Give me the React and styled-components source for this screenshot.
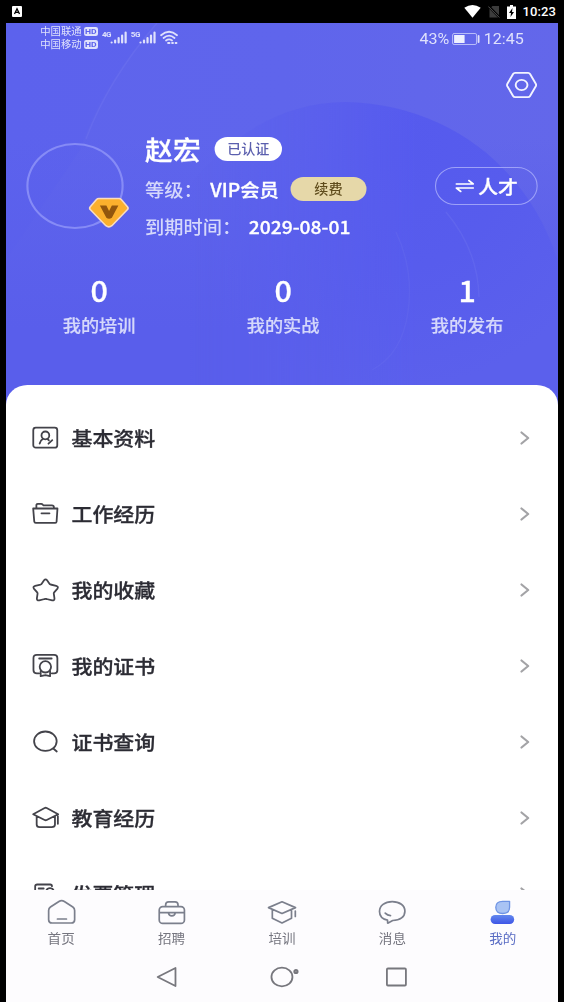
import styled, { createGlobalStyle } from "styled-components";

// the screen is laid out 516px wide and stretched to the 552px of the frame
const STRETCH = 552 / 516;

const COLORS = {
  white: "#ffffff",
  soft: "#d5d8fb",
  ink: "#2c2c34",
  grey: "#75757f",
  brand: "#5b60ec",
  tab: "#fdfcfe",
  active: "#5a6cc4",
};

const menus = [
  { label: "基本资料", icon: "profile" },
  { label: "工作经历", icon: "folder" },
  { label: "我的收藏", icon: "star" },
  { label: "我的证书", icon: "cert" },
  { label: "证书查询", icon: "search" },
  { label: "教育经历", icon: "cap" },
  { label: "发票管理", icon: "invoice" },
];

const stats = [
  { value: 0, label: "我的培训" },
  { value: 0, label: "我的实战" },
  { value: 1, label: "我的发布" },
];

const tabs = [
  { label: "首页", icon: "home" },
  { label: "招聘", icon: "bag" },
  { label: "培训", icon: "tabCap" },
  { label: "消息", icon: "chat" },
  { label: "我的", icon: "me", active: true },
];

const icons = {
  profile: (
    <>
      <rect x="1.600" y="3.700" width="24" height="20" rx="2.500" />
      <circle cx="13.700" cy="11.400" r="3.900" />
      <path d="M8 19.500c.5-2.400 1.600-3.800 3.400-4.800M15.800 14.800l1.400 1.600M16.800 19.700l3.800-3.500" />
    </>
  ),
  folder: (
    <>
      <path d="M1.500 8.500h24.300l-.9 13.200q-.1 1.200-1.300 1.200H4q-1.200 0-1.400-1.200zM4.700 8.500V5.300q0-1.500 1.500-1.500h3.300q.9 0 1.600.8l.7.700h8.400q2 0 2 1.800v1.400M9.800 13.300h8" />
    </>
  ),
  star: (
    <path d="M12.400 4.300q1.500-2 3 0l2.400 3.400q.4.600 1.100.8l5.600 1.300q2.600.8 1.300 2.800L22.500 16.400q-.5.600-.4 1.300l.7 4.700q0 2.400-2.300 2l-5.600-1.400q-.9-.2-1.800 0l-5.600 1.400q-2.300.4-2.300-2l.7-4.700q.1-.7-.4-1.300L2.200 12.600q-1.300-2 1.300-2.800L8.900 8.500q.7-.2 1.100-.8z" />
  ),
  cert: (
    <>
      <path d="M7.500 21.300H5.200q-3.400 0-3.400-3.100V6q0-3.200 3.400-3.200h17.200q3.300 0 3.300 3.200v12.200q0 3.100-3.300 3.100h-2.300M7.500 6.500h12.500" />
      <circle cx="13.700" cy="14.800" r="5.700" />
      <path d="M9 19v5.200l4.700-1 4.700 1V19" />
    </>
  ),
  search: (
    <>
      <ellipse cx="13.700" cy="13.200" rx="11.300" ry="9.700" />
      <path d="M21.600 20.500l3.500 3" />
    </>
  ),
  cap: (
    <>
      <path d="M1.500 10.200L13 4q1-.5 2 0l11.500 6.200L15 16q-1 .5-2 0zM5 12.500V20.500q0 2.700 3 2.700h12q3.300 0 3.300-2.700v-8M26.200 12.200v7.600" />
    </>
  ),
  invoice: (
    <>
      <path d="M3.500 22V6.200q0-1.700 2-1.700h13q1.800 0 1.800 1.700M7 8.500h5M14.500 11q.8-2.800 3.800-2.800t3.800 2.800" />
      <path d="M7 14h4M7 22h12" />
    </>
  ),
  home: (
    <path d="M2 14.500q0-2.300 1.800-3.500l8.500-5.500q2.700-1.700 5.400 0l8.500 5.500q1.800 1.200 1.800 3.500v9.200q0 3.300-3.300 3.300H5.300Q2 27 2 23.700zM10.800 23h9" />
  ),
  bag: (
    <>
      <rect x="2.400" y="10.600" width="25.200" height="16.800" rx="3.500" />
      <path d="M8.800 10.200V8.900q0-3 3-3h6.400q3 0 3 3v1.300M3 16.600h9M18 16.600h9M11.500 16.600q.6 3.200 3.500 3.200t3.500-3.200z" />
    </>
  ),
  tabCap: (
    <path d="M1.500 11.600L15 5.800l13.500 5.800L15 17.500zM5.300 13.800v8.400l9.700 4.700 9.500-4.700v-8M28.300 15v5.500" />
  ),
  chat: (
    <path d="M10.300 24.200C5.300 23 2.300 19.600 2.300 15.400 2.300 9.700 7.500 5.600 15 5.600s12.700 4 12.700 9.600c0 5.600-4.700 9.300-12.200 9.300l-5 2.700zM8 17.200q2.300 2.400 5.300 2.400" />
  ),
  me: (
    <>
      <defs>
        <linearGradient id="me" x1="0" y1="0" x2="0" y2="1">
          <stop offset="0" stopColor="#6388ee" />
          <stop offset="1" stopColor="#3e55e6" />
        </linearGradient>
      </defs>
      <path
        d="M22.200 5.300v6q0 6.200-6.900 6.200t-6.900-6.200q0-6 6.900-6z"
        fill="#a9c3f4"
        stroke="#6f94e4"
        strokeWidth="1.300"
      />
      <rect x="3.200" y="19" width="23.600" height="9" rx="4.500" fill="url(#me)" stroke="none" />
    </>
  ),
};

export default function App() {
  return (
    <>
      <GlobalStyle />
      <Frame>
        <SystemBar>
          <svg width="10" height="11" viewBox="0 0 10 11">
            <rect width="10" height="11" rx="1" fill="#fff" />
            <path d="M2.500 8L5 2.700 7.500 8M3.500 6.300h3" fill="none" stroke="#000" strokeWidth="1.300" />
          </svg>
          <SystemRight>
            <svg width="17" height="13" viewBox="0 0 17 13">
              <path d="M.3 2.800Q8.500-2.600 16.700 2.800L8.500 12.800z" fill="#fff" />
            </svg>
            <svg width="12" height="13" viewBox="0 0 12 13">
              <path d="M4.500 1H11v11.500H1.500V4z" fill="#3c3c3c" />
              <path d="M.5 1l11 11.500" stroke="#000" strokeWidth="2.500" />
              <path d="M.3 1.500l11 11" stroke="#555" strokeWidth="1" />
            </svg>
            <svg width="9" height="14" viewBox="0 0 9 14">
              <path d="M3 0h3v1.500h3V14H0V1.500h3z" fill="#fff" />
              <path d="M5.500 3L2 8h2l-.5 4L7 7H5z" fill="#000" />
            </svg>
            <Clock>10:23</Clock>
          </SystemRight>
        </SystemBar>
        <Screen>
          <Header>
            <Waves />
            <PhoneBar>
              <Carriers>
                {["中国联通", "中国移动"].map((name) => (
                  <Carrier key={name}>
                    {name}
                    <Hd>HD</Hd>
                  </Carrier>
                ))}
              </Carriers>
              <Signal label="4G" />
              <Signal label="5G" />
              <Glyph w={18} h={14} stroke="#dfe1fc" weight={1.8}>
                <path d="M1 4.200Q9-2.600 17 4.200M3.500 7Q9 2.200 14.500 7M6 9.500q3-2.300 6 0" />
                <path d="M8 12h1.500M12 12h1M15.500 12h1" />
              </Glyph>
              <Battery>
                43%
                <Glyph w={28} h={12} stroke="#b9bdf8" weight={1}>
                  <rect x=".5" y=".5" width="24" height="11" rx="1.500" />
                  <rect x="2" y="2" width="10.500" height="8" fill="#eef0ff" stroke="none" />
                  <path d="M26.500 3v6" stroke="#dfe1fc" strokeWidth="1.800" />
                </Glyph>
                12:45
              </Battery>
            </PhoneBar>
            <Toolbar>
              <Glyph w={32} h={28} stroke="#f3f4ff" weight={1.9}>
                <path d="M9.500 1.900h13q1.300 0 2 1.200l5.700 9.600q.7 1.300 0 2.600l-5.700 9.600q-.7 1.200-2 1.200h-13q-1.300 0-2-1.200l-5.700-9.600q-.7-1.300 0-2.600l5.700-9.600q.7-1.200 2-1.200z" />
                <ellipse cx="16" cy="14" rx="5.900" ry="5.100" />
              </Glyph>
            </Toolbar>
            <Profile>
              <Avatar>
                <VipMark>
                  <Glyph w={41} h={32} stroke="none" weight={0}>
                    <path
                      d="M10.500 1.500h20q1.500 0 2.600 1.200l6 7q1.300 1.600-.2 3.100L23.500 28.700q-3 2.300-6 0L2.100 12.800q-1.500-1.500-.2-3.100l6-7Q9 1.500 10.500 1.500z"
                      fill="#fbb02d"
                      stroke="#f9dcc0"
                      strokeWidth="1.600"
                    />
                    <path d="M11.500 8.500h6.500l2.700 5.500 2.800-5.500H30L23.500 20.800q-2.800 1.800-5.500 0z" fill="#92560d" />
                  </Glyph>
                </VipMark>
              </Avatar>
              <Info>
                <NameLine>
                  <Name>赵宏</Name>
                  <Verified>已认证</Verified>
                </NameLine>
                <InfoLine>
                  <span>等级：</span>
                  <Strong>VIP会员</Strong>
                  <Renew>续费</Renew>
                </InfoLine>
                <InfoLine>
                  <span>到期时间：</span>
                  <Strong>2029-08-01</Strong>
                </InfoLine>
              </Info>
              <Switch>
                <Glyph w={19} h={14} stroke="#fff" weight={1.6}>
                  <path d="M1 5h17l-4.500-3.500M18 9H1l4.500 3.500" />
                </Glyph>
                人才
              </Switch>
            </Profile>
            <Stats>
              {stats.map((item) => (
                <Stat key={item.label}>
                  <Value>{item.value}</Value>
                  <StatLabel>{item.label}</StatLabel>
                </Stat>
              ))}
            </Stats>
          </Header>
          <Menu>
            {menus.map((item) => (
              <Row key={item.label}>
                <Glyph w={28} h={28} stroke="#43434a" weight={1.8}>
                  {icons[item.icon]}
                </Glyph>
                <RowLabel>{item.label}</RowLabel>
                <Glyph w={11} h={15} stroke="#a3a3a6" weight={2.2}>
                  <path d="M2 1.500l6.700 5.500L2 12.500" />
                </Glyph>
              </Row>
            ))}
          </Menu>
          <TabBar>
            {tabs.map((item) => (
              <Tab key={item.label} $active={item.active}>
                <Glyph w={30} h={30} stroke="#7b7f8c" weight={1.7}>
                  {icons[item.icon]}
                </Glyph>
                {item.label}
              </Tab>
            ))}
          </TabBar>
          <NavBar>
            <Glyph w={32} h={22} stroke="#77777d" weight={1.8}>
              <path d="M24 2v18L6.200 11z" />
            </Glyph>
            <Glyph w={32} h={22} stroke="#77777d" weight={1.8}>
              <ellipse cx="16" cy="11" rx="10.500" ry="9.300" />
              <circle cx="30" cy="5.500" r="1.700" fill="#99999e" />
            </Glyph>
            <Glyph w={32} h={22} stroke="#77777d" weight={1.8}>
              <rect x="6.500" y="2.500" width="19" height="17" rx="1" />
            </Glyph>
          </NavBar>
        </Screen>
      </Frame>
    </>
  );
}

function Glyph({ w, h, stroke, weight, children }) {
  return (
    <Drawing
      $w={w}
      $h={h}
      viewBox={`0 0 ${w} ${h}`}
      preserveAspectRatio="none"
      fill="none"
      stroke={stroke}
      strokeWidth={weight}
      strokeLinecap="round"
      strokeLinejoin="round"
    >
      {children}
    </Drawing>
  );
}

function Signal({ label }) {
  return (
    <SignalBox>
      <Network>{label}</Network>
      <Glyph w={16} h={13} stroke="#dfe1fc" weight={2.2}>
        <path d="M.8 11.500v0M4.300 11.500v-2M7.800 11.500V7M11.300 11.500v-7M14.800 11.500V1.500" />
      </Glyph>
    </SignalBox>
  );
}

function Waves() {
  return (
    <Backdrop viewBox="6 23 552 382" preserveAspectRatio="none">
      <defs>
        <linearGradient id="base" x1="0" y1="0" x2="1" y2="0">
          <stop offset="0" stopColor="#5e64ec" />
          <stop offset=".5" stopColor="#5f65ec" />
          <stop offset="1" stopColor="#6367ea" />
        </linearGradient>
        <linearGradient id="floor" x1="0" y1="0" x2="0" y2="1">
          <stop offset=".3" stopColor="#595eeb" stopOpacity="0" />
          <stop offset=".8" stopColor="#595eeb" />
        </linearGradient>
        <radialGradient id="disc" gradientUnits="userSpaceOnUse" cx="390" cy="150" r="240">
          <stop offset="0" stopColor="#555aee" />
          <stop offset=".5" stopColor="#575ced" />
          <stop offset="1" stopColor="#5b60ec" />
        </radialGradient>
        <linearGradient id="fade" gradientUnits="userSpaceOnUse" x1="190" y1="0" x2="420" y2="0">
          <stop offset="0" stopColor="#fff" stopOpacity="0" />
          <stop offset="1" stopColor="#fff" />
        </linearGradient>
        <mask id="side">
          <rect x="6" y="23" width="552" height="382" fill="url(#fade)" />
        </mask>
      </defs>
      <rect x="6" y="23" width="552" height="382" fill="url(#base)" />
      <path d="M6 23H157Q104 80 80 150L6 260z" fill="#5a60ed" opacity=".3" />
      <rect x="6" y="23" width="552" height="382" fill="url(#floor)" />
      <path
        d="M100 405C130 220 230 102 345 102C450 104 530 170 558 262V405z"
        fill="url(#disc)"
        mask="url(#side)"
      />
      <path d="M157 23Q108 80 86 139" fill="none" stroke="#6b70ef" strokeWidth="1.400" opacity=".6" />
      <path d="M446 212Q478 250 479 297" fill="none" stroke="#666bee" strokeWidth="1.400" opacity=".6" />
      <path d="M396 232Q414 270 408 312T372 370" fill="none" stroke="#666bee" strokeWidth="1.400" opacity=".4" />
    </Backdrop>
  );
}

const GlobalStyle = createGlobalStyle`
  body {
    margin: 0;
    background: #000;
    font-family: "Noto Sans CJK SC", sans-serif;
  }
  * {
    box-sizing: border-box;
  }
`;

const Frame = styled.div`
  width: 564px;
  height: 1002px;
  padding-left: 6px;
  overflow: hidden;
  background: #000;
`;

const SystemBar = styled.div`
  height: 23px;
  padding: 0 8px 0 6px;
  display: flex;
  align-items: center;
  justify-content: space-between;
`;

const SystemRight = styled.div`
  display: flex;
  align-items: center;
  gap: 7px;
`;

const Clock = styled.span`
  font: 500 13px/22px Roboto, sans-serif;
  letter-spacing: 0.1px;
  color: ${COLORS.white};
`;

const Screen = styled.div`
  width: 516px;
  height: 979px;
  display: flex;
  flex-direction: column;
  overflow: hidden;
  background: ${COLORS.brand};
  transform: scaleX(${STRETCH});
  transform-origin: left top;
`;

const Drawing = styled.svg`
  display: block;
  flex: none;
  overflow: visible;
  width: ${(p) => p.$w / STRETCH}px;
  height: ${(p) => p.$h}px;
`;

const Header = styled.header`
  position: relative;
  flex: none;
  height: 362px;
`;

const Backdrop = styled.svg`
  position: absolute;
  top: 0;
  left: 0;
  width: 100%;
  height: 382px;
`;

const PhoneBar = styled.div`
  position: relative;
  height: 29px;
  padding: 0 32px;
  display: flex;
  align-items: center;
  color: #dfe1fc;
`;

const Carriers = styled.div`
  display: flex;
  flex-direction: column;
  margin-right: 4px;
`;

const Carrier = styled.div`
  display: flex;
  align-items: center;
  font-size: 9.700px;
  line-height: 13px;
`;

const Hd = styled.span`
  margin-left: 2px;
  width: 13px;
  height: 9px;
  border-radius: 2px;
  background: #dfe1fc;
  color: ${COLORS.brand};
  font: 700 8px/9px Roboto, sans-serif;
  text-align: center;
`;

const SignalBox = styled.div`
  display: flex;
  align-items: center;
  margin-right: 4px;
`;

const Network = styled.span`
  align-self: flex-start;
  width: 8px;
  font: 700 7.500px/7px Roboto, sans-serif;
  letter-spacing: -0.5px;
`;

const Battery = styled.div`
  margin-left: auto;
  padding-top: 2px;
  display: flex;
  align-items: center;
  gap: 3px;
  font: 400 15px/20px Roboto, sans-serif;
`;

const Toolbar = styled.div`
  position: relative;
  height: 65px;
  padding: 19px 19px 0 0;
  display: flex;
  justify-content: flex-end;
`;

const Profile = styled.section`
  position: relative;
  height: 138px;
  padding: 0 19px;
  display: flex;
`;

const Avatar = styled.div`
  position: relative;
  flex: none;
  width: 91px;
  height: 86px;
  margin: 26px 20px 0 0;
  border: 2px solid #868bf6;
  border-radius: 50%;
`;

const VipMark = styled.div`
  position: absolute;
  left: 55.500px;
  top: 52px;
`;

const Info = styled.div`
  flex: 1;
  padding-top: 13px;
`;

const NameLine = styled.div`
  height: 38px;
  display: flex;
  align-items: center;
`;

const Name = styled.h1`
  margin: 0;
  font-size: 26px;
  line-height: 36px;
  font-weight: 500;
  -webkit-text-stroke: 0.3px;
  color: ${COLORS.white};
`;

const Pill = styled.span`
  display: flex;
  align-items: center;
  justify-content: center;
  height: 24px;
  border-radius: 12px;
  font-size: 13.200px;
  line-height: 24px;
  font-weight: 500;
`;

const Verified = styled(Pill)`
  width: 63px;
  margin-left: 13px;
  background: ${COLORS.white};
  color: #5b5fae;
`;

const Renew = styled(Pill)`
  width: 71px;
  margin-left: 11px;
  background: #e6d8a9;
  color: #5f4c1c;
`;

const InfoLine = styled.div`
  height: 38px;
  margin-top: 2px;
  display: flex;
  align-items: center;
  font-size: 18px;
  font-weight: 500;
  color: ${COLORS.soft};

  & + & {
    margin-top: -1px;
  }
`;

const Strong = styled.span`
  margin-left: 7px;
  -webkit-text-stroke: 0.3px;
  color: ${COLORS.white};
`;

const Switch = styled.button`
  flex: none;
  width: 96px;
  height: 38px;
  margin-top: 50px;
  padding: 0 0 1px;
  display: flex;
  align-items: center;
  justify-content: center;
  gap: 4px;
  border: 1.500px solid #9da1f8;
  border-radius: 19px;
  background: none;
  font-family: inherit;
  font-size: 18.500px;
  font-weight: 500;
  -webkit-text-stroke: 0.3px;
  color: ${COLORS.white};
`;

const Stats = styled.section`
  position: relative;
  display: flex;
`;

const Stat = styled.div`
  flex: 1;
  padding: 16px 0 0 2px;
  display: flex;
  flex-direction: column;
  align-items: center;
`;

const Value = styled.span`
  font-size: 28.500px;
  line-height: 38px;
  font-weight: 500;
  -webkit-text-stroke: 0.3px;
  color: ${COLORS.white};
`;

const StatLabel = styled.span`
  margin-top: 2px;
  font-size: 17px;
  line-height: 28px;
  font-weight: 500;
  -webkit-text-stroke: 0.2px;
  color: ${COLORS.soft};
`;

const Menu = styled.main`
  position: relative;
  flex: 1;
  min-height: 0;
  padding: 15px 26px 0 24px;
  overflow: hidden;
  border-radius: 20px 20px 0 0;
  background: ${COLORS.white};
`;

const Row = styled.div`
  height: 76px;
  display: flex;
  align-items: center;
`;

const RowLabel = styled.span`
  flex: 1;
  margin-left: 11px;
  padding-bottom: 1px;
  font-size: 19.600px;
  font-weight: 500;
  -webkit-text-stroke: 0.3px;
  color: ${COLORS.ink};
`;

const TabBar = styled.nav`
  flex: none;
  height: 62px;
  display: flex;
  background: ${COLORS.tab};
`;

const Tab = styled.div`
  flex: 1;
  padding-top: 6px;
  display: flex;
  flex-direction: column;
  align-items: center;
  font-size: 12.700px;
  line-height: 23px;
  color: ${(p) => (p.$active ? COLORS.active : COLORS.grey)};
`;

const NavBar = styled.div`
  flex: none;
  height: 50px;
  display: flex;
  align-items: center;
  justify-content: center;
  gap: 77px;
  background: ${COLORS.tab};
`;
